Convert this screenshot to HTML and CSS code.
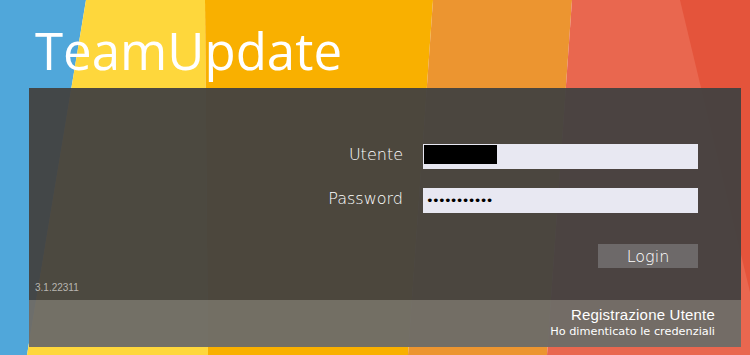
FILE: index.html
```html
<!DOCTYPE html>
<html lang="it">
<head>
<meta charset="utf-8">
<title>TeamUpdate</title>
<link rel="stylesheet" href="styles.css">
</head>
<body>
<div class="page">
  <svg class="bg" viewBox="0 0 750 355" preserveAspectRatio="none" aria-hidden="true">
    <polygon points="0,0 86,0 27,355 0,355" fill="#50a7da"/>
    <polygon points="86,0 205,0 208,355 27,355" fill="#fed73c"/>
    <polygon points="205,0 433,0 408,355 208,355" fill="#f9b000"/>
    <polygon points="433,0 572,0 547,355 408,355" fill="#ec9530"/>
    <polygon points="572,0 750,0 750,355 547,355" fill="#e9674f"/>
    <polygon points="680,0 750,0 750,292" fill="#e4543b"/>
  </svg>
  <h1 class="title">TeamUpdate</h1>
  <div class="panel">
    <div class="main">
      <form class="form">
        <div class="row">
          <label class="label" for="u">Utente</label>
          <div class="input"><span class="redact"></span></div>
        </div>
        <div class="row">
          <label class="label" for="p">Password</label>
          <div class="input"><span class="dots">•••••••••••</span></div>
        </div>
        <div class="row btnrow">
          <button type="button" class="login">Login</button>
        </div>
      </form>
      <div class="version">3.1.22311</div>
    </div>
    <div class="footer">
      <a class="reg">Registrazione Utente</a>
      <a class="forgot">Ho dimenticato le credenziali</a>
    </div>
  </div>
</div>
</body>
</html>
```
FILE: styles.css
```css
html, body {
  margin: 0;
  padding: 0;
}
body {
  width: 750px;
  height: 355px;
  overflow: hidden;
  font-family: "Liberation Sans", Arial, sans-serif;
}
.page {
  position: relative;
  width: 750px;
  height: 355px;
  display: flex;
  flex-direction: column;
}
.bg {
  position: absolute;
  left: 0;
  top: 0;
  width: 750px;
  height: 355px;
  z-index: 0;
}
.title {
  position: relative;
  z-index: 1;
  margin: 0;
  padding: 26px 0 0 35px;
  height: 64px;
  box-sizing: border-box;
  font-family: "Open Sans", sans-serif;
  font-weight: 400;
  font-size: 51px;
  line-height: 48px;
  color: #ffffff;
}
.panel {
  position: relative;
  z-index: 1;
  margin: 24px 0 0 29px;
  width: 712px;
  height: 259px;
  display: flex;
  flex-direction: column;
}
.main {
  height: 212px;
  background: rgba(66, 65, 64, 0.95);
  display: flex;
  flex-direction: column;
  box-sizing: border-box;
  padding: 56px 43px 0 6px;
}
.form {
  display: flex;
  flex-direction: column;
  gap: 19px;
  margin: 0;
}
.row {
  display: flex;
  justify-content: flex-end;
  align-items: center;
  gap: 20px;
}
.label {
  font-family: "DejaVu Sans", sans-serif;
  font-weight: 200;
  font-size: 16px;
  color: #ffffff;
  position: relative;
  top: -2px;
}
.input {
  width: 275px;
  height: 25px;
  background: #e8e8f2;
  display: flex;
  align-items: center;
  box-sizing: border-box;
  padding-left: 1px;
}
.redact {
  display: block;
  width: 73px;
  height: 19px;
  background: #000;
  margin-top: -4px;
}
.dots {
  font-family: "DejaVu Sans", sans-serif;
  font-size: 13px;
  letter-spacing: -1.7px;
  color: #000;
  padding-left: 2px;
  line-height: 1;
}
.btnrow {
  margin-top: 12px;
}
.login {
  width: 100px;
  height: 24px;
  border: none;
  background: #6d6969;
  color: #ffffff;
  font-family: "DejaVu Sans", sans-serif;
  font-weight: 200;
  font-size: 16px;
  padding: 0;
}
.version {
  margin-top: 14px;
  font-size: 10px;
  color: #b8b6b1;
}
.footer {
  height: 47px;
  background: rgba(110, 108, 103, 0.97);
  display: flex;
  flex-direction: column;
  align-items: flex-end;
  box-sizing: border-box;
  padding: 6px 26px 0 0;
}
.reg {
  font-size: 15px;
  letter-spacing: 0.2px;
  color: #ffffff;
  line-height: 18px;
}
.forgot {
  font-family: "DejaVu Sans", sans-serif;
  font-size: 11.3px;
  color: #ffffff;
  line-height: 16px;
}
```
